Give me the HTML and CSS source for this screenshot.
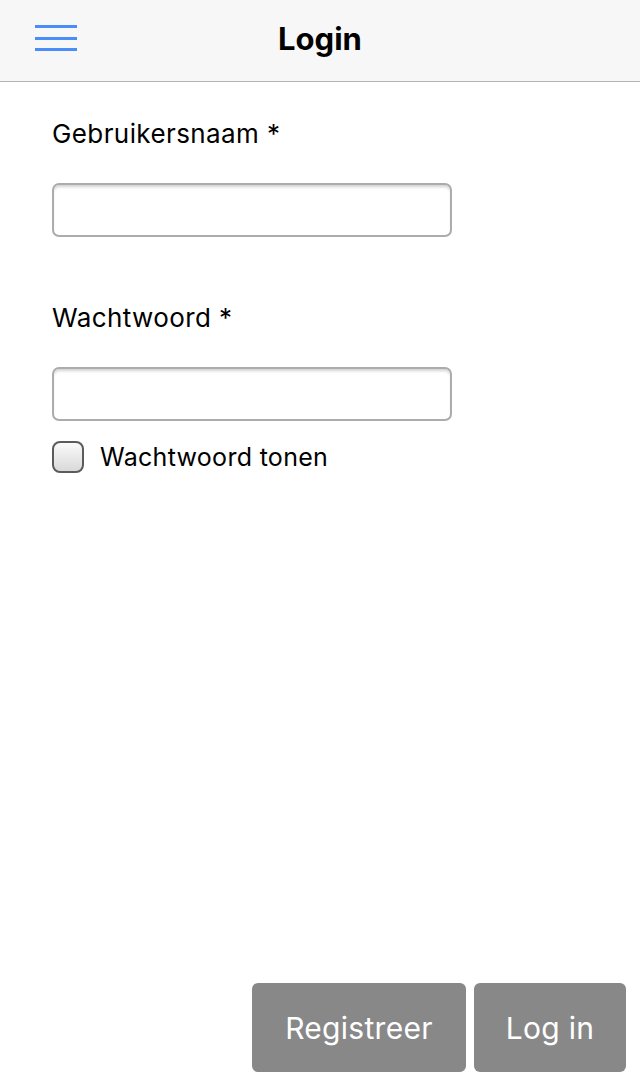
FILE: index.html
```html
<!DOCTYPE html>
<html lang="nl">
<head>
    <meta charset="UTF-8">
    <meta name="viewport" content="width=device-width, initial-scale=1.0">
    <title>Login</title>
    <link rel="stylesheet" href="styles.css">
</head>
<body>

    <header class="topbar">
        <button class="menu-btn" aria-label="Menu">
            <span></span><span></span><span></span>
        </button>
        <h1>Login</h1>
    </header>

    <main class="content">
        <form class="login-form">
            <label class="field-label" for="username">Gebruikersnaam *</label>
            <input type="text" id="username" class="field">

            <label class="field-label second" for="password">Wachtwoord *</label>
            <input type="password" id="password" class="field">

            <label class="show-pass">
                <input type="checkbox" id="showpass">
                <span class="box"></span>
                Wachtwoord tonen
            </label>
        </form>

        <div class="actions">
            <button class="btn register">Registreer</button>
            <button class="btn login">Log in</button>
        </div>
    </main>

</body>
</html>
```

FILE: styles.css
```css
/* General */
html, body {
    height: 100%;
}

body {
    margin: 0;
    font-family: Inter, "Noto Sans", sans-serif;
    color: #000;
    background: #fff;
    display: flex;
    flex-direction: column;
}

/* Header */
.topbar {
    height: 81px;
    background: #f7f7f7;
    border-bottom: 1px solid #b2b2b2;
    display: flex;
    align-items: center;
    justify-content: center;
    position: relative;
    flex-shrink: 0;
}

.topbar h1 {
    margin: 0;
    font-size: 31px;
    font-weight: 700;
    padding-bottom: 4px;
}

.menu-btn {
    position: absolute;
    left: 35px;
    top: 25px;
    width: 42px;
    height: 26px;
    padding: 0;
    border: none;
    background: none;
    display: flex;
    flex-direction: column;
    justify-content: space-between;
    cursor: pointer;
}

.menu-btn span {
    display: block;
    height: 3px;
    background: #4a8df8;
}

/* Form */
.content {
    flex: 1;
    display: flex;
    flex-direction: column;
    padding: 0 14px 19px 52px;
}

.login-form {
    display: flex;
    flex-direction: column;
}

.field-label {
    font-size: 26px;
    letter-spacing: 0.4px;
    margin-top: 34px;
    margin-bottom: 31px;
    line-height: 36px;
}

.field-label.second {
    margin-top: 63px;
}

.field {
    width: 400px;
    height: 54px;
    box-sizing: border-box;
    border: 2px solid #acacac;
    border-radius: 7px;
    box-shadow: inset 0 3px 3px -1px rgba(0, 0, 0, 0.18);
    font-size: 22px;
    padding: 0 10px;
    outline: none;
    margin: 0;
}

.show-pass {
    display: flex;
    align-items: center;
    gap: 16px;
    margin-top: 20px;
    font-size: 25px;
    letter-spacing: 0.3px;
    line-height: 32px;
}

.show-pass input {
    display: none;
}

.box {
    width: 32px;
    height: 32px;
    box-sizing: border-box;
    border: 2px solid #5b5b5b;
    border-radius: 8px;
    background: linear-gradient(#fafafa, #d9d9d9);
}

/* Buttons */
.actions {
    margin-top: auto;
    display: flex;
    justify-content: flex-end;
    gap: 8px;
}

.btn {
    height: 89px;
    border: none;
    border-radius: 6px;
    background: #888;
    color: #fff;
    font-family: Inter, "Noto Sans", sans-serif;
    font-size: 30px;
    letter-spacing: 0.3px;
    cursor: pointer;
}

.register {
    width: 214px;
}

.login {
    width: 152px;
}
```
